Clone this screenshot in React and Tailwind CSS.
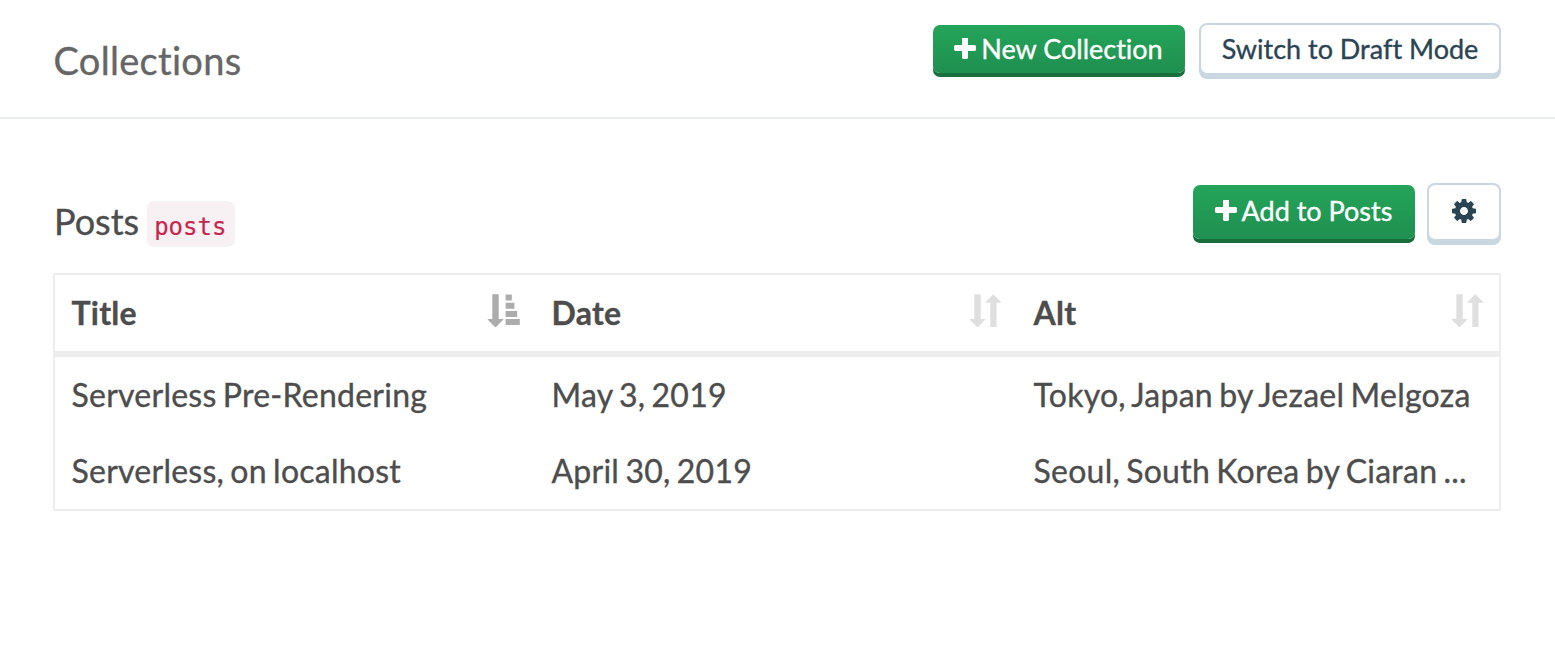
import React from "react";

function Plus() {
  return (
    <svg viewBox="192 192 1408 1408" className="h-[22px] w-[22px] shrink-0 fill-white">
      <path d="M1600 736v192q0 40-28 68t-68 28h-416v416q0 40-28 68t-68 28h-192q-40 0-68-28t-28-68v-416h-416q-40 0-68-28t-28-68v-192q0-40 28-68t68-28h416v-416q0-40 28-68t68-28h192q40 0 68 28t28 68v416h416q40 0 68 28t28 68z" />
    </svg>
  );
}

function Cog() {
  return (
    <svg viewBox="128 128 1536 1536" className="h-6 w-6 fill-[#2b4454]">
      <path d="M1152 896q0-106-75-181t-181-75-181 75-75 181 75 181 181 75 181-75 75-181zm512-109v222q0 12-8 23t-20 13l-185 28q-19 54-39 91 35 50 107 138 10 12 10 25t-9 23q-27 37-99 108t-94 71q-12 0-26-9l-138-108q-44 23-91 38-16 136-29 186-7 28-36 28h-222q-14 0-24.5-8.5t-11.5-21.5l-28-184q-49-16-90-37l-141 107q-10 9-25 9-14 0-25-11-126-114-165-168-7-10-7-23 0-12 8-23 15-21 51-66.5t54-70.5q-27-50-41-99l-183-27q-13-2-21-12.5t-8-23.5v-222q0-12 8-23t19-13l186-28q14-46 39-92-40-57-107-138-10-12-10-24 0-10 9-23 26-36 98.5-107.5t94.5-71.5q13 0 26 10l138 107q44-23 91-38 16-136 29-186 7-28 36-28h222q14 0 24.5 8.5t11.5 21.5l28 184q49 16 90 37l142-107q9-9 24-9 13 0 25 10 129 119 165 170 7 8 7 22 0 12-8 23-15 21-51 66.5t-54 70.5q26 50 41 98l183 28q13 2 21 12.5t8 23.5z" />
    </svg>
  );
}

function SortIcon({ active }) {
  return active ? (
    <svg viewBox="0 0 34 34" className="mt-px h-[34px] w-[34px] fill-[#acacac]">
      <path d="M5.3.3h6.4V25h4.2q.9 0 .3.8L9.3 32.7q-.8.8-1.6 0L.8 25.8q-.5-.8.4-.8h4.1zM18.6.5h6.2v6h-6.2zM18.6 8.7h8.8v6h-8.8zM18.6 16.9h11.6v6H18.6zM18.6 25h14.2v6H18.6z" />
    </svg>
  ) : (
    <svg viewBox="0 0 34 34" className="mt-px h-[34px] w-[34px] fill-[#dfdfdf]">
      <path d="M5.3.3h6.4V25h4.2q.9 0 .3.8L9.3 32.7q-.8.8-1.6 0L.8 25.8q-.5-.8.4-.8h4.1zM21.3 33h6.2V8.7h4.2q.9 0 .3-.8L25.1 1q-.8-.8-1.6 0l-6.8 6.9q-.6.8.3.8h4.3z" />
    </svg>
  );
}

const columns = ["Title", "Date", "Alt"];
const rows = [
  ["Serverless Pre-Rendering", "May 3, 2019", "Tokyo, Japan by Jezael Melgoza"],
  ["Serverless, on localhost", "April 30, 2019", "Seoul, South Korea by Ciaran ..."],
];

export default function App() {
  return (
    <div className="h-[656px] overflow-hidden bg-white font-['Lato',sans-serif] text-[#4d4d4d] [-webkit-text-stroke:0.35px] [font-variant-ligatures:none]">
      <header className="flex h-[119px] items-start justify-between border-b-2 border-[#e9edf0] pl-[53.5px] pr-[54px]">
        <h1 className="pt-[36px] text-[38px] leading-[48px] tracking-[0.3px] text-[#666]">Collections</h1>
        <div className="flex items-start gap-[14px] pt-[23px] text-[27px] [word-spacing:-1.5px]">
          <button className="mt-[2px] flex h-[48px] w-[252px] items-center justify-center gap-[5px] rounded-[7px] bg-linear-to-b from-[#24a55a] to-[#1f8f4f] pr-px leading-[48px] text-white shadow-[0_4px_0_#186f3d]">
            <Plus />
            <span>New Collection</span>
          </button>
          <button className="h-[52px] w-[302px] rounded-[8px] border-2 border-[#c9d7e1] bg-white leading-[48px] text-[#2b4454] shadow-[0_4px_0_#c9d7e1]">
            Switch to Draft Mode
          </button>
        </div>
      </header>
      <main className="px-[53px]">
        <div className="flex h-[154px] items-start justify-between pr-px pt-[64px]">
          <div className="flex items-start gap-2 pt-[18px]">
            <h2 className="-mt-[2px] pl-px text-[36px] leading-[44px]">Posts</h2>
            <code className="h-[46px] w-[88px] rounded-[7px] bg-[#f8f1f4] pl-[7px] pt-[4px] font-['DejaVu_Sans_Mono',monospace] text-[24px] leading-[44px] text-[#c7254e] [-webkit-text-stroke:0.2px]">posts</code>
          </div>
          <div className="flex items-start gap-3 text-[27px] [word-spacing:-1.5px]">
            <button className="mt-[2px] flex h-[54px] w-[222px] items-center justify-center gap-[5px] rounded-[7px] bg-linear-to-b from-[#24a55a] to-[#1f8f4f] pb-[2px] pr-px text-white shadow-[0_4px_0_#186f3d]">
              <Plus />
              <span>Add to Posts</span>
            </button>
            <button aria-label="Settings" className="flex h-[58px] w-[74px] items-center justify-center rounded-[8px] border-2 border-[#c9d7e1] bg-white pb-[2px] shadow-[0_4px_0_#c9d7e1]">
              <Cog />
            </button>
          </div>
        </div>
        <div className="h-[238px] w-[1448px] border-2 border-[#ededed] text-[32px] tracking-[0.25px] [word-spacing:-2.2px]">
          <div className="grid h-[82px] grid-cols-[480px_482px_482px] border-b-[6px] border-[#ededed] font-bold">
            {columns.map((name, i) => (
              <div key={name} className="flex items-start justify-between pl-[16.5px] pr-[14px] pt-[18px]">
                <span className="leading-[40px]">{name}</span>
                <SortIcon active={i === 0} />
              </div>
            ))}
          </div>
          {rows.map((row) => (
            <div key={row[0]} className="grid h-[76px] grid-cols-[480px_482px_482px] items-center">
              {row.map((cell) => (
                <div key={cell} className="whitespace-nowrap pl-[16.5px] leading-[40px]">{cell}</div>
              ))}
            </div>
          ))}
        </div>
      </main>
    </div>
  );
}
